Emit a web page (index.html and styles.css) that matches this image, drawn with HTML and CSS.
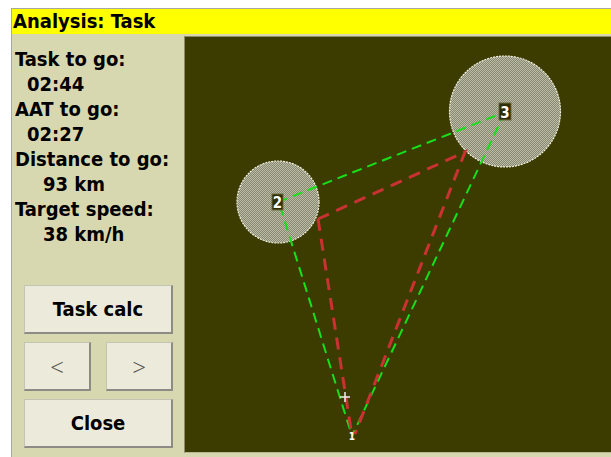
FILE: index.html
```html
<!DOCTYPE html>
<html>
<head>
    <meta charset="UTF-8">
    <title>Analysis: Task</title>
    <link rel="stylesheet" href="styles.css">
</head>
<body>
    <div class="window">
        <div class="caption">Analysis: Task</div>
        <div class="content">
            <div class="side">
                <div class="info">
                    <div>Task to go:</div>
                    <div class="val">02:44</div>
                    <div>AAT to go:</div>
                    <div class="val">02:27</div>
                    <div>Distance to go:</div>
                    <div class="val wide">93 km</div>
                    <div>Target speed:</div>
                    <div class="val wide">38 km/h</div>
                </div>
                <div class="buttons">
                    <button class="btn">Task calc</button>
                    <div class="pair">
                        <button class="btn arrow">&lt;</button>
                        <button class="btn arrow">&gt;</button>
                    </div>
                    <button class="btn">Close</button>
                </div>
            </div>
            <div class="mapwrap">
                <div class="map">
                    <svg width="427" height="416" viewBox="0 0 427 416">
                        <defs>
                            <pattern id="dither" width="2" height="2" patternUnits="userSpaceOnUse">
                                <rect width="2" height="2" fill="#88886c"/>
                                <rect width="1" height="1" fill="#bcbcaa"/>
                                <rect x="1" y="1" width="1" height="1" fill="#bcbcaa"/>
                            </pattern>
                        </defs>
                        <!-- observation zones -->
                        <circle cx="94" cy="166" r="41" fill="url(#dither)" stroke="#f0f0e4" stroke-width="1.2" stroke-dasharray="2 1"/>
                        <circle cx="321" cy="75.5" r="55.5" fill="url(#dither)" stroke="#f0f0e4" stroke-width="1.2" stroke-dasharray="2 1"/>
                        <!-- planned task -->
                        <g fill="none" stroke="#18e018" stroke-width="2" stroke-dasharray="10 6">
                            <line x1="94" y1="166" x2="321" y2="76"/>
                            <line x1="321" y1="76" x2="168" y2="400"/>
                            <line x1="96" y1="170" x2="168" y2="400"/>
                        </g>
                        <!-- target route -->
                        <g fill="none" stroke="#c83232" stroke-width="3" stroke-dasharray="12 8">
                            <polyline points="134,183 281,116 171,398"/>
                            <polyline points="134,183 168,400"/>
                        </g>
                        <path d="M156 361h10M161 356v10" stroke="#f0f0f0" stroke-width="1.5"/>
                        <text x="168" y="404" class="wp1">1</text>
                        <rect x="88" y="158" width="11" height="16" fill="#2e2e00" stroke="#6a6a40"/>
                        <text x="93.5" y="172" class="wp">2</text>
                        <rect x="315" y="67" width="12" height="17" fill="#2e2e00" stroke="#6a6a40"/>
                        <text x="321" y="81.5" class="wp">3</text>
                    </svg>
                </div>
            </div>
        </div>
    </div>
</body>
</html>
```
FILE: styles.css
```css
*{
    box-sizing:border-box;
}
html,body{
    margin:0;
    background:#fff;
}
body{
    width:611px;
    height:457px;
    overflow:hidden;
    font-family:"DejaVu Sans Condensed","DejaVu Sans",sans-serif;
    font-stretch:condensed;
}
.window{
    margin:8px 0 0 11px;
    height:449px;
    border-top:1px solid #a8a8a0;
    border-left:1px solid #a8a8a0;
    background:#d8d8b0;
    display:flex;
    flex-direction:column;
}
.caption{
    height:25px;
    background:#ffff00;
    color:#000;
    font-weight:bold;
    font-size:20px;
    line-height:25px;
    padding-left:1px;
}
.content{
    flex:1;
    display:flex;
}
.side{
    width:172px;
    display:flex;
    flex-direction:column;
    padding:13px 11px 9px 3px;
}
.info{
    font-weight:bold;
    font-size:20px;
    line-height:25px;
    color:#000;
}
.val{
    padding-left:12px;
}
.val.wide{
    padding-left:28px;
}
.buttons{
    margin-top:auto;
    padding-left:9px;
    display:flex;
    flex-direction:column;
    gap:8px;
}
.btn{
    height:49px;
    width:149px;
    background:#eceada;
    border:1px solid #c4c4b4;
    border-right:2px solid #8c8c84;
    border-bottom:2px solid #8c8c84;
    font-family:inherit;
    font-stretch:condensed;
    font-weight:bold;
    font-size:20px;
    color:#000;
    padding:0;
}
.pair{
    display:flex;
    justify-content:space-between;
}
.pair .btn{
    width:67px;
}
.btn.arrow{
    font-family:"Open Sans","DejaVu Sans",sans-serif;
    font-stretch:normal;
    font-weight:300;
    font-size:24px;
    color:#505050;
}
.mapwrap{
    flex:1;
    padding-top:2px;
}
.map{
    width:427px;
    height:417px;
    background:#3c3c00;
    border-top:1px solid #8c8c6c;
    border-left:1px solid #8c8c6c;
    border-bottom:1px solid #b8b890;
    overflow:hidden;
}
.map svg{
    display:block;
    margin:-1px 0 0 -1px;
}
.wp{
    fill:#fff;
    font-family:"DejaVu Sans",sans-serif;
    font-weight:bold;
    font-size:15px;
    text-anchor:middle;
}
.wp1{
    fill:#fff;
    font-family:"DejaVu Sans",sans-serif;
    font-weight:bold;
    font-size:10px;
    text-anchor:middle;
}
```
